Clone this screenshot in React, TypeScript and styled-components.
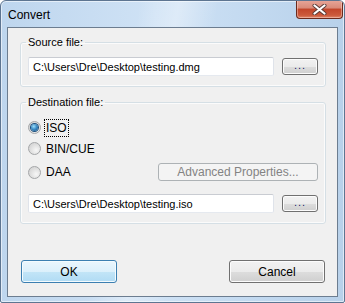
import { FC } from "react";
import styled, { createGlobalStyle, css } from "styled-components";

const GlobalStyle = createGlobalStyle`
  html, body {
    margin: 0;
    padding: 0;
    background: #ffffff;
  }
  body {
    font-family: "Liberation Sans", Arial, sans-serif;
    font-size: 11px;
    color: #000000;
  }
`;

const Window = styled.div`
  box-sizing: border-box;
  width: 345px;
  height: 303px;
  display: flex;
  flex-direction: column;
  border: 1px solid #5d7591;
  border-radius: 6px 6px 2px 2px;
  background:
    linear-gradient(100deg, rgba(255, 255, 255, 0) 35%, rgba(255, 255, 255, 0.35) 45%, rgba(255, 255, 255, 0) 55%),
    linear-gradient(to right, #bed6ee 0%, #cfe2f5 45%, #c2d9f0 75%, #b8d1ea 100%);
  box-shadow: inset 0 0 0 1px rgba(255, 255, 255, 0.55);
  overflow: hidden;
`;

const TitleBar = styled.div`
  height: 26px;
  display: flex;
  justify-content: space-between;
  align-items: flex-start;
  padding-left: 7px;
`;

const Title = styled.span`
  font-size: 12px;
  line-height: 12px;
  margin-top: 8px;
`;

const CloseButton = styled.div`
  box-sizing: border-box;
  width: 47px;
  height: 19px;
  margin-top: -1px;
  margin-right: 1px;
  display: flex;
  align-items: center;
  justify-content: center;
  border: 1px solid #6b2a1d;
  border-top: none;
  border-radius: 0 0 4px 4px;
  background: linear-gradient(#e8a79a 0%, #d98a78 45%, #c2452a 50%, #cc5a3c 85%, #e0896c 100%);
  box-shadow: inset 0 0 0 1px rgba(255, 220, 210, 0.45);
`;

const Client = styled.div`
  flex: 1;
  display: flex;
  flex-direction: column;
  margin: 0 6px 5px 6px;
  padding: 7px 11px 13px 12px;
  background: #f0f0f0;
  border: 1px solid #6c7d90;
`;

const Group = styled.fieldset<{ $gap?: number }>`
  margin: ${(p) => p.$gap ?? 0}px 0 0 0;
  padding: 8px 7px 10px 7px;
  border: 1px solid #d5dfe5;
  border-radius: 3px;
  box-shadow: inset 0 0 0 1px #fbfbfb;
  min-width: 0;
`;

const Legend = styled.legend`
  padding: 0 2px;
  margin-left: -2px;
  line-height: 14px;
  font-size: 11px;
  color: #000000;
`;

const PathRow = styled.div<{ $top?: number }>`
  display: flex;
  align-items: center;
  gap: 8px;
  margin-top: ${(p) => p.$top ?? 0}px;
`;

const PathField = styled.div`
  box-sizing: border-box;
  flex: 1;
  height: 19px;
  display: flex;
  align-items: center;
  padding-left: 4px;
  background: #ffffff;
  border: 1px solid #dfe3ea;
  border-top-color: #c9ccd2;
  border-bottom-color: #e5e9ef;
  border-radius: 2px;
  white-space: nowrap;
`;

const buttonFace = css`
  box-sizing: border-box;
  display: flex;
  align-items: center;
  justify-content: center;
  border: 1px solid #707070;
  border-radius: 3px;
  background: linear-gradient(#f2f2f2 0%, #ebebeb 50%, #dddddd 51%, #cfcfcf 100%);
  box-shadow: inset 0 0 0 1px #fcfcfc;
  font-size: 11px;
  color: #000000;
`;

const BrowseButton = styled.div`
  ${buttonFace};
  width: 36px;
  height: 17px;
  padding-bottom: 3px;
  letter-spacing: 1px;
  color: #1c1c6e;
`;

const DialogButton = styled.div<{ $primary?: boolean }>`
  ${buttonFace};
  width: 96px;
  height: 23px;
  font-size: 12px;
  ${(p) =>
    p.$primary &&
    css`
      border-color: #3c7fb1;
      background: linear-gradient(#eaf6fd 0%, #dcf0fb 50%, #c3e5f7 51%, #b0dbf4 100%);
      box-shadow: inset 0 0 0 1px #f4fbfe;
    `}
`;

const DisabledButton = styled.div`
  ${buttonFace};
  width: 160px;
  height: 18px;
  border-color: #adb2b5;
  background: #f4f4f4;
  box-shadow: none;
  color: #838383;
  font-size: 12px;
`;

const RadioRow = styled.div<{ $height: number; $top?: number }>`
  height: ${(p) => p.$height}px;
  margin-top: ${(p) => p.$top ?? 0}px;
  display: flex;
  align-items: center;
  justify-content: space-between;
`;

const RadioLabel = styled.label`
  display: flex;
  align-items: center;
  gap: 4px;
  padding-left: 0;
`;

const RadioDot = styled.span<{ $checked?: boolean }>`
  box-sizing: border-box;
  width: 13px;
  height: 13px;
  border-radius: 50%;
  border: 1px solid #a4a6a8;
  background: radial-gradient(circle at 65% 65%, #f7f7f7 0%, #dcdcdc 60%, #cfcfcf 100%);
  display: flex;
  align-items: center;
  justify-content: center;
  &::after {
    content: "";
    display: ${(p) => (p.$checked ? "block" : "none")};
    width: 7px;
    height: 7px;
    border-radius: 50%;
    background: radial-gradient(circle at 40% 35%, #9fe0fa 0%, #3d8ec8 45%, #104c82 100%);
    box-shadow: 0 0 0 1px #1d4f7c;
  }
`;

const RadioText = styled.span<{ $focused?: boolean }>`
  padding: 1px 1px;
  outline: ${(p) => (p.$focused ? "1px dotted #000000" : "none")};
  outline-offset: 0;
  line-height: 14px;
  font-size: 12px;
`;

const ButtonBar = styled.div`
  margin-top: auto;
  display: flex;
  justify-content: space-between;
  padding: 0 1px;
`;

const CloseGlyph: FC = () => (
  <svg width="15" height="11" viewBox="0 0 15 11">
    <path d="M2.5 1.5 L12.5 9.5 M12.5 1.5 L2.5 9.5" stroke="#5a3b36" strokeWidth="4" strokeLinecap="round" />
    <path d="M2.5 1.5 L12.5 9.5 M12.5 1.5 L2.5 9.5" stroke="#ffffff" strokeWidth="2.2" strokeLinecap="round" />
  </svg>
);

type RadioProps = {
  label: string;
  checked?: boolean;
  focused?: boolean;
};

const Radio: FC<RadioProps> = ({ label, checked, focused }) => (
  <RadioLabel>
    <RadioDot $checked={checked} />
    <RadioText $focused={focused}>{label}</RadioText>
  </RadioLabel>
);

export default function App() {
  return (
    <>
      <GlobalStyle />
      <Window>
        <TitleBar>
          <Title>Convert</Title>
          <CloseButton>
            <CloseGlyph />
          </CloseButton>
        </TitleBar>
        <Client>
          <Group>
            <Legend>Source file:</Legend>
            <PathRow>
              <PathField>C:\Users\Dre\Desktop\testing.dmg</PathField>
              <BrowseButton>...</BrowseButton>
            </PathRow>
          </Group>

          <Group $gap={8}>
            <Legend>Destination file:</Legend>
            <RadioRow $height={21}>
              <Radio label="ISO" checked focused />
            </RadioRow>
            <RadioRow $height={21}>
              <Radio label="BIN/CUE" />
            </RadioRow>
            <RadioRow $height={18} $top={4}>
              <Radio label="DAA" />
              <DisabledButton>Advanced Properties...</DisabledButton>
            </RadioRow>
            <PathRow $top={13}>
              <PathField>C:\Users\Dre\Desktop\testing.iso</PathField>
              <BrowseButton>...</BrowseButton>
            </PathRow>
          </Group>

          <ButtonBar>
            <DialogButton $primary>OK</DialogButton>
            <DialogButton>Cancel</DialogButton>
          </ButtonBar>
        </Client>
      </Window>
    </>
  );
}
